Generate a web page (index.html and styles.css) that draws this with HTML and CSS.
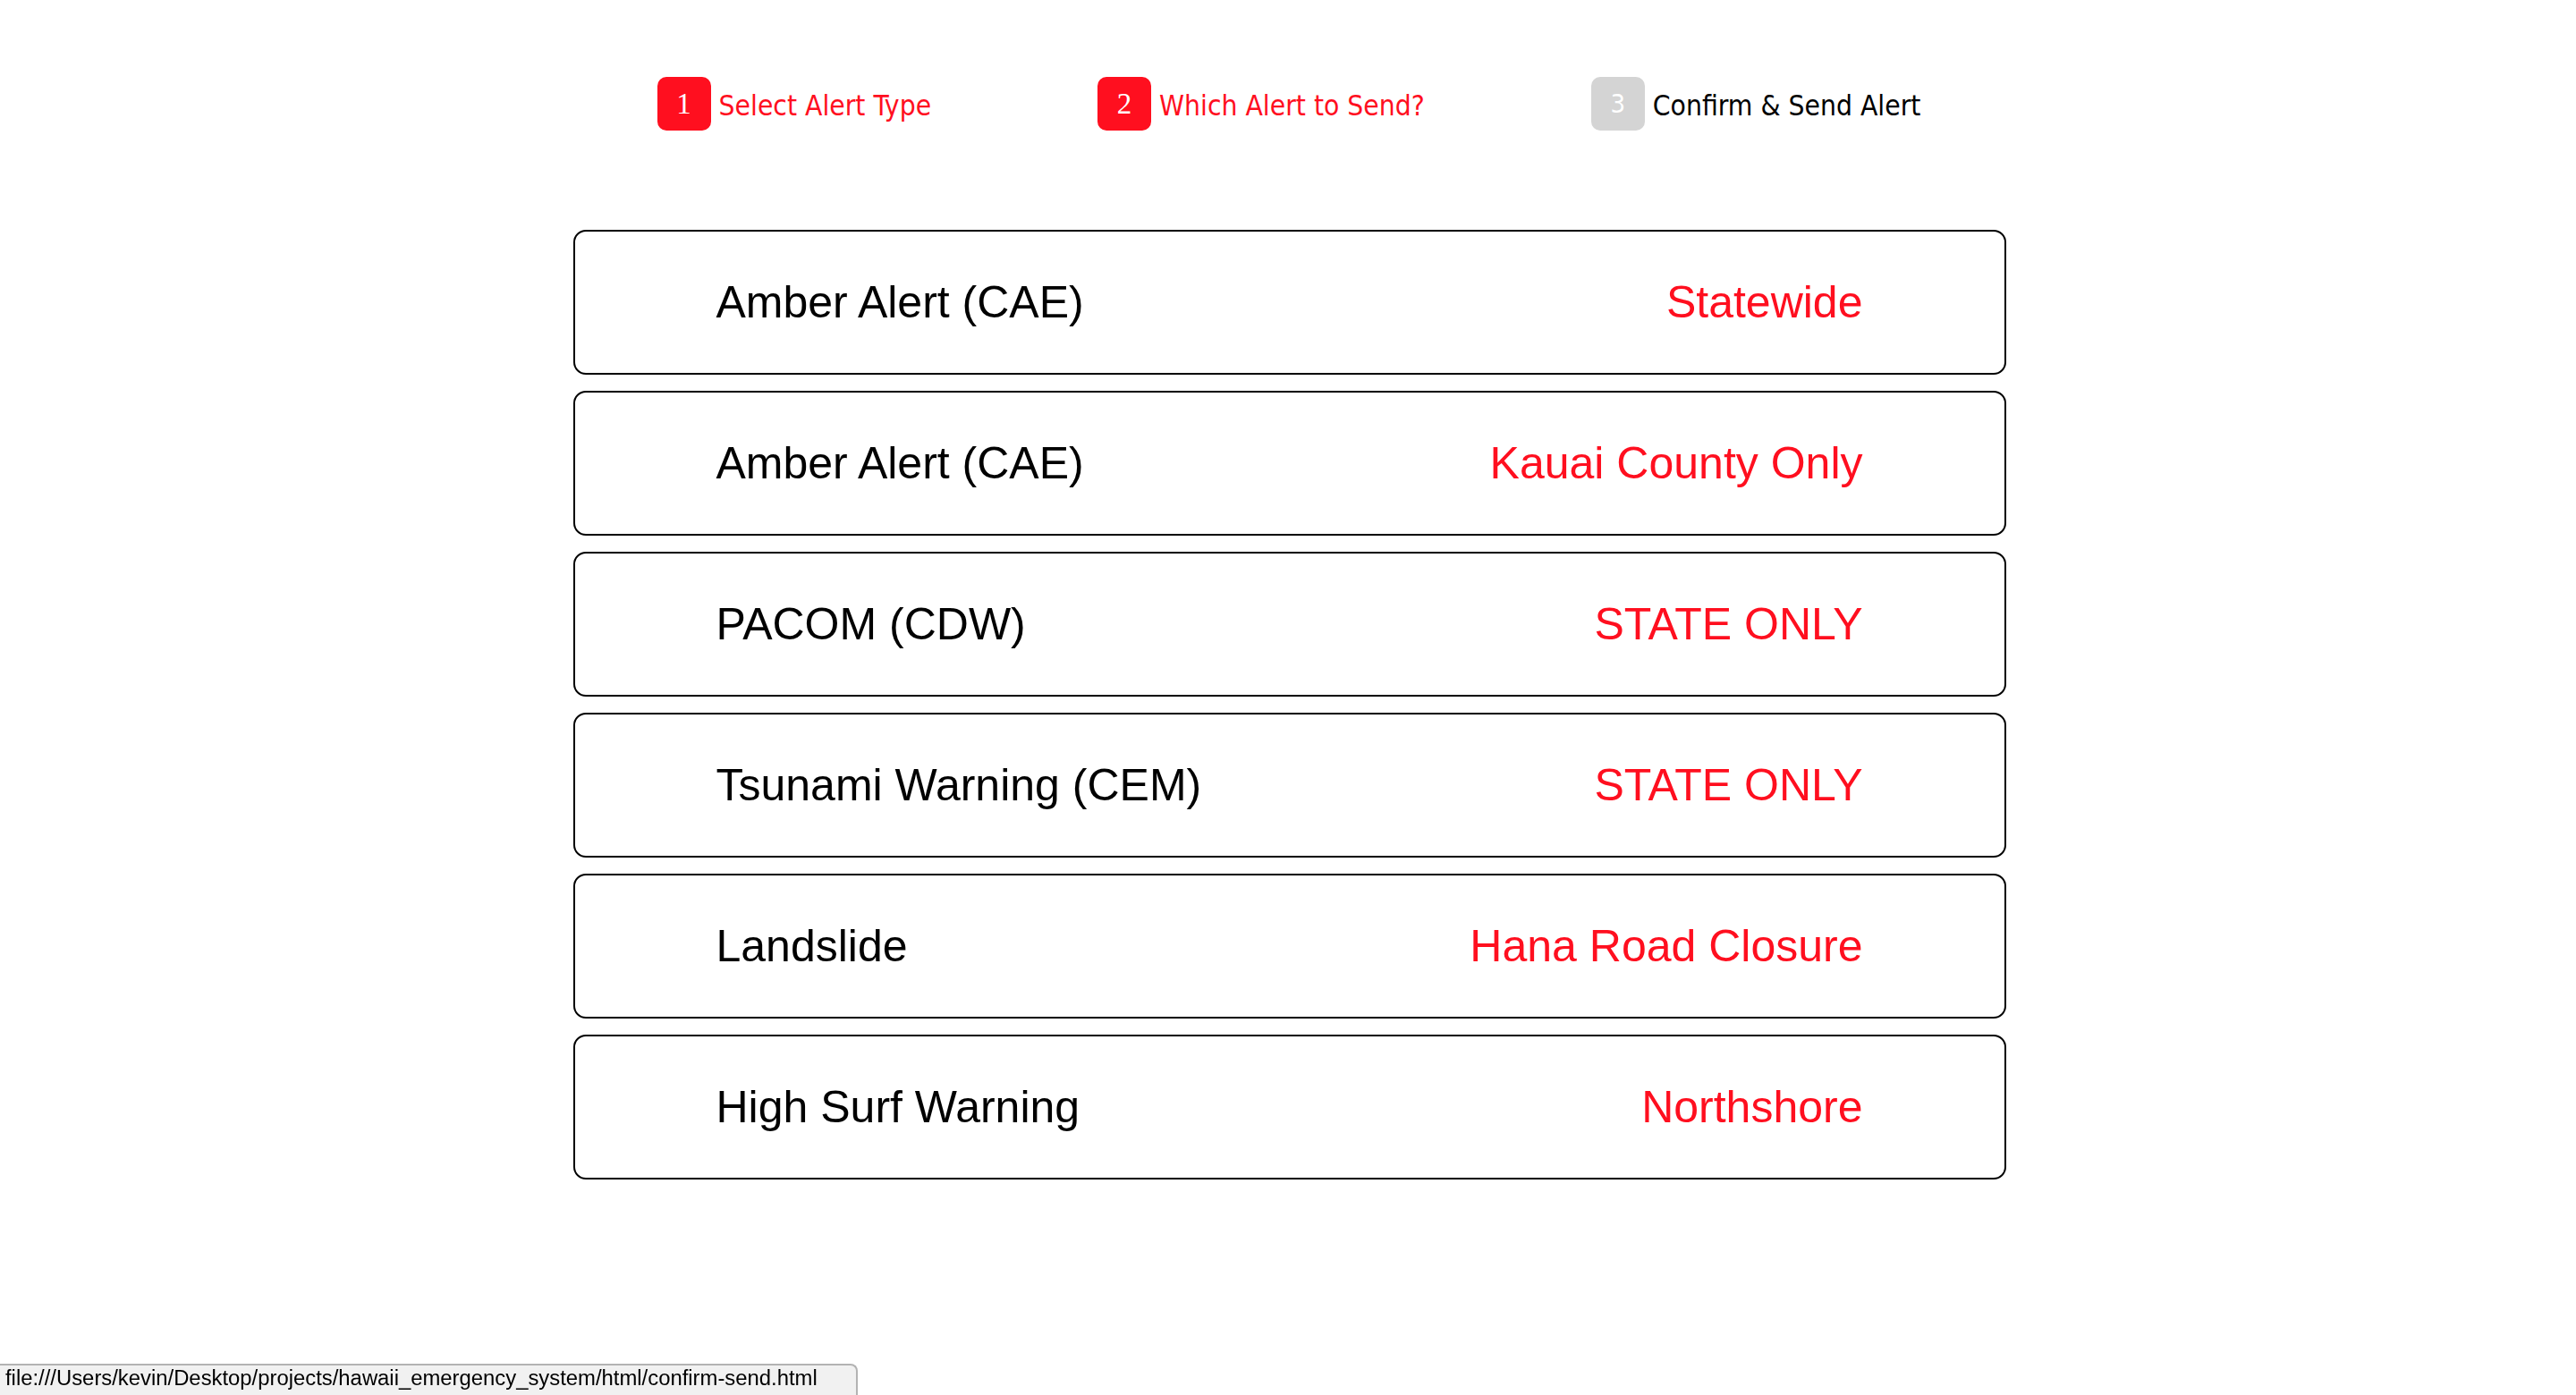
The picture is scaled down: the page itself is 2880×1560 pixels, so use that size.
FILE: index.html
```html
<!DOCTYPE html>
<html lang="en">
<head>
<meta charset="utf-8">
<title>Confirm &amp; Send</title>
<link rel="stylesheet" href="styles.css">
</head>
<body>
  <nav class="steps">
    <div class="step active"><span class="badge">1</span><span class="label">Select Alert Type</span></div>
    <div class="step active"><span class="badge">2</span><span class="label">Which Alert to Send?</span></div>
    <div class="step pending"><span class="badge">3</span><span class="label">Confirm &amp; Send Alert</span></div>
  </nav>

  <main class="alerts">
    <div class="alert"><span class="name">Amber Alert (CAE)</span><span class="area">Statewide</span></div>
    <div class="alert"><span class="name">Amber Alert (CAE)</span><span class="area">Kauai County Only</span></div>
    <div class="alert"><span class="name">PACOM (CDW)</span><span class="area">STATE ONLY</span></div>
    <div class="alert"><span class="name">Tsunami Warning (CEM)</span><span class="area">STATE ONLY</span></div>
    <div class="alert"><span class="name">Landslide</span><span class="area">Hana Road Closure</span></div>
    <div class="alert"><span class="name">High Surf Warning</span><span class="area">Northshore</span></div>
  </main>

  <div class="statusbar">file:///Users/kevin/Desktop/projects/hawaii_emergency_system/html/confirm-send.html</div>
</body>
</html>
```

FILE: styles.css
```css
html, body {
  margin: 0;
  padding: 0;
  background: #ffffff;
}

body {
  width: 2880px;
  height: 1560px;
  overflow: hidden;
  font-family: "Liberation Sans", Arial, sans-serif;
}

.steps {
  display: flex;
  justify-content: center;
  gap: 186px;
  padding-top: 86px;
  padding-left: 2px;
  height: 60px;
}

.step {
  display: flex;
  align-items: center;
  font-family: "DejaVu Sans Condensed", "DejaVu Sans", sans-serif;
  font-stretch: condensed;
  font-size: 31.5px;
}

.badge {
  width: 60px;
  height: 60px;
  border-radius: 10px;
  display: flex;
  align-items: center;
  justify-content: center;
  color: #ffffff;
  font-family: "Liberation Serif", "Times New Roman", serif;
  font-size: 33px;
  margin-right: 9px;
}

.step.pending .badge {
  font-family: "DejaVu Sans Condensed", "DejaVu Sans", sans-serif;
  font-size: 29px;
}

.label {
  padding-top: 4px;
}

.step.active .badge {
  background: #ff0f1f;
}

.step.active .label {
  color: #ff0f1f;
}

.step.pending .badge {
  background: #d4d4d4;
}

.step.pending .label {
  color: #000000;
}

.alerts {
  width: 1602px;
  margin: 111px auto 0;
  padding-left: 3px;
  display: flex;
  flex-direction: column;
  gap: 18px;
}

.alert {
  box-sizing: border-box;
  height: 162px;
  border: 2px solid #000000;
  border-radius: 14px;
  padding: 0 158px;
  display: flex;
  align-items: center;
  justify-content: space-between;
  font-size: 50px;
}

.name {
  color: #000000;
}

.area {
  color: #ff0f1f;
}

.statusbar {
  position: fixed;
  left: 0;
  bottom: 0;
  box-sizing: border-box;
  width: 959px;
  height: 35px;
  background: #f1f1f1;
  border-top: 2px solid #b3b3b3;
  border-right: 2px solid #b3b3b3;
  border-top-right-radius: 8px;
  padding-left: 6px;
  font-size: 23.85px;
  line-height: 27px;
  color: #000000;
  white-space: nowrap;
}
```
